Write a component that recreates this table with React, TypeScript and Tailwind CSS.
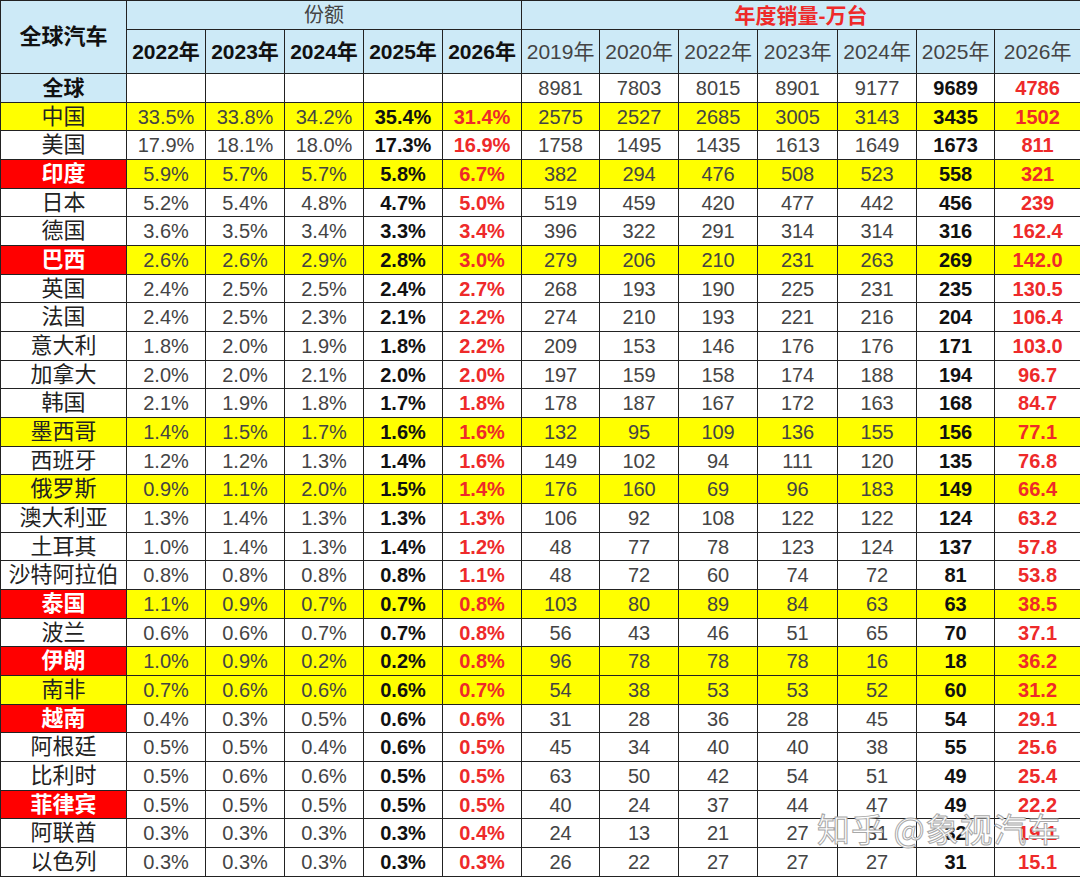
import React from "react";

type Row = {
  name: string;
  share: string[];
  sales: string[];
  yellow?: boolean;
  redName?: boolean;
  head?: boolean;
};

const rows: Row[] = [
  { name: "全球", share: ["", "", "", "", ""], sales: ["8981", "7803", "8015", "8901", "9177", "9689", "4786"], head: true },
  { name: "中国", share: ["33.5%", "33.8%", "34.2%", "35.4%", "31.4%"], sales: ["2575", "2527", "2685", "3005", "3143", "3435", "1502"], yellow: true },
  { name: "美国", share: ["17.9%", "18.1%", "18.0%", "17.3%", "16.9%"], sales: ["1758", "1495", "1435", "1613", "1649", "1673", "811"] },
  { name: "印度", share: ["5.9%", "5.7%", "5.7%", "5.8%", "6.7%"], sales: ["382", "294", "476", "508", "523", "558", "321"], yellow: true, redName: true },
  { name: "日本", share: ["5.2%", "5.4%", "4.8%", "4.7%", "5.0%"], sales: ["519", "459", "420", "477", "442", "456", "239"] },
  { name: "德国", share: ["3.6%", "3.5%", "3.4%", "3.3%", "3.4%"], sales: ["396", "322", "291", "314", "314", "316", "162.4"] },
  { name: "巴西", share: ["2.6%", "2.6%", "2.9%", "2.8%", "3.0%"], sales: ["279", "206", "210", "231", "263", "269", "142.0"], yellow: true, redName: true },
  { name: "英国", share: ["2.4%", "2.5%", "2.5%", "2.4%", "2.7%"], sales: ["268", "193", "190", "225", "231", "235", "130.5"] },
  { name: "法国", share: ["2.4%", "2.5%", "2.3%", "2.1%", "2.2%"], sales: ["274", "210", "193", "221", "216", "204", "106.4"] },
  { name: "意大利", share: ["1.8%", "2.0%", "1.9%", "1.8%", "2.2%"], sales: ["209", "153", "146", "176", "176", "171", "103.0"] },
  { name: "加拿大", share: ["2.0%", "2.0%", "2.1%", "2.0%", "2.0%"], sales: ["197", "159", "158", "174", "188", "194", "96.7"] },
  { name: "韩国", share: ["2.1%", "1.9%", "1.8%", "1.7%", "1.8%"], sales: ["178", "187", "167", "172", "163", "168", "84.7"] },
  { name: "墨西哥", share: ["1.4%", "1.5%", "1.7%", "1.6%", "1.6%"], sales: ["132", "95", "109", "136", "155", "156", "77.1"], yellow: true },
  { name: "西班牙", share: ["1.2%", "1.2%", "1.3%", "1.4%", "1.6%"], sales: ["149", "102", "94", "111", "120", "135", "76.8"] },
  { name: "俄罗斯", share: ["0.9%", "1.1%", "2.0%", "1.5%", "1.4%"], sales: ["176", "160", "69", "96", "183", "149", "66.4"], yellow: true },
  { name: "澳大利亚", share: ["1.3%", "1.4%", "1.3%", "1.3%", "1.3%"], sales: ["106", "92", "108", "122", "122", "124", "63.2"] },
  { name: "土耳其", share: ["1.0%", "1.4%", "1.3%", "1.4%", "1.2%"], sales: ["48", "77", "78", "123", "124", "137", "57.8"] },
  { name: "沙特阿拉伯", share: ["0.8%", "0.8%", "0.8%", "0.8%", "1.1%"], sales: ["48", "72", "60", "74", "72", "81", "53.8"] },
  { name: "泰国", share: ["1.1%", "0.9%", "0.7%", "0.7%", "0.8%"], sales: ["103", "80", "89", "84", "63", "63", "38.5"], yellow: true, redName: true },
  { name: "波兰", share: ["0.6%", "0.6%", "0.7%", "0.7%", "0.8%"], sales: ["56", "43", "46", "51", "65", "70", "37.1"] },
  { name: "伊朗", share: ["1.0%", "0.9%", "0.2%", "0.2%", "0.8%"], sales: ["96", "78", "78", "78", "16", "18", "36.2"], yellow: true, redName: true },
  { name: "南非", share: ["0.7%", "0.6%", "0.6%", "0.6%", "0.7%"], sales: ["54", "38", "53", "53", "52", "60", "31.2"], yellow: true },
  { name: "越南", share: ["0.4%", "0.3%", "0.5%", "0.6%", "0.6%"], sales: ["31", "28", "36", "28", "45", "54", "29.1"], redName: true },
  { name: "阿根廷", share: ["0.5%", "0.5%", "0.4%", "0.6%", "0.5%"], sales: ["45", "34", "40", "40", "38", "55", "25.6"] },
  { name: "比利时", share: ["0.5%", "0.6%", "0.6%", "0.5%", "0.5%"], sales: ["63", "50", "42", "54", "51", "49", "25.4"] },
  { name: "菲律宾", share: ["0.5%", "0.5%", "0.5%", "0.5%", "0.5%"], sales: ["40", "24", "37", "44", "47", "49", "22.2"], redName: true },
  { name: "阿联酋", share: ["0.3%", "0.3%", "0.3%", "0.3%", "0.4%"], sales: ["24", "13", "21", "27", "31", "32", "19.1"] },
  { name: "以色列", share: ["0.3%", "0.3%", "0.3%", "0.3%", "0.3%"], sales: ["26", "22", "27", "27", "27", "31", "15.1"] },
];

const shareYears = ["2022年", "2023年", "2024年", "2025年", "2026年"];
const salesYears = ["2019年", "2020年", "2022年", "2023年", "2024年", "2025年", "2026年"];

// colour of a value cell by its place in the group: last = red, the one before = bold black
function valueClass(i: number, len: number) {
  if (i === len - 1) return "font-bold text-[#ee2a2a]";
  if (i === len - 2) return "font-bold text-[#111]";
  return "text-[#444]";
}

export default function App() {
  const cell = "border border-[#222] text-center align-middle p-0";
  return (
    <div className="relative w-[1080px] h-[877px] overflow-hidden bg-white font-['Liberation_Sans','Noto_Sans_CJK_SC',sans-serif] text-[20px] leading-none">
      <table className="table-fixed border-collapse w-[1080px]">
        <colgroup>
          <col className="w-[126px]" />
          <col className="w-[79px]" />
          <col className="w-[79px]" />
          <col className="w-[79px]" />
          <col className="w-[79px]" />
          <col className="w-[79px]" />
          <col className="w-[78px]" />
          <col className="w-[79px]" />
          <col className="w-[79px]" />
          <col className="w-[80px]" />
          <col className="w-[79px]" />
          <col className="w-[78px]" />
          <col className="w-[86px]" />
        </colgroup>
        <thead>
          <tr className="h-[29px] bg-[#cdeaf7]">
            <th rowSpan={2} className={`${cell} text-[22px] font-bold text-[#111]`}>
              全球汽车
            </th>
            <th colSpan={5} className={`${cell} font-normal text-[#444]`}>
              份额
            </th>
            <th colSpan={7} className={`${cell} text-[21px] font-bold text-[#ee2a2a]`}>
              年度销量-万台
            </th>
          </tr>
          <tr className="h-[44px] bg-[#cdeaf7]">
            {shareYears.map((y) => (
              <th key={"s" + y} className={`${cell} text-[21px] font-bold text-[#111]`}>
                {y}
              </th>
            ))}
            {salesYears.map((y) => (
              <th key={"v" + y} className={`${cell} text-[21px] font-normal text-[#444]`}>
                {y}
              </th>
            ))}
          </tr>
        </thead>
        <tbody>
          {rows.map((r) => {
            const rowBg = r.yellow ? "bg-[#ffff00]" : "bg-white";
            const nameCls = r.head
              ? "bg-[#cdeaf7] text-[21px] font-bold text-[#111]"
              : r.redName
              ? "bg-[#ff0000] text-[22px] font-bold text-white"
              : "text-[22px] text-[#222]";
            return (
              <tr key={r.name} className={`h-[28.68px] ${rowBg}`}>
                <td className={`${cell} ${nameCls}`}>{r.name}</td>
                {r.share.map((v, i) => (
                  <td key={"s" + i} className={`${cell} ${valueClass(i, r.share.length)}`}>
                    {v}
                  </td>
                ))}
                {r.sales.map((v, i) => (
                  <td key={"v" + i} className={`${cell} ${valueClass(i, r.sales.length)}`}>
                    {v}
                  </td>
                ))}
              </tr>
            );
          })}
        </tbody>
      </table>

      {/* zhihu watermark */}
      <div className="absolute left-[817px] top-[812px] text-[33px] leading-none tracking-[1px] text-white [-webkit-text-stroke:1px_#a8a8a8] font-['Noto_Sans_CJK_SC',sans-serif] whitespace-nowrap pointer-events-none">
        知乎 @象视汽车
      </div>
    </div>
  );
}
